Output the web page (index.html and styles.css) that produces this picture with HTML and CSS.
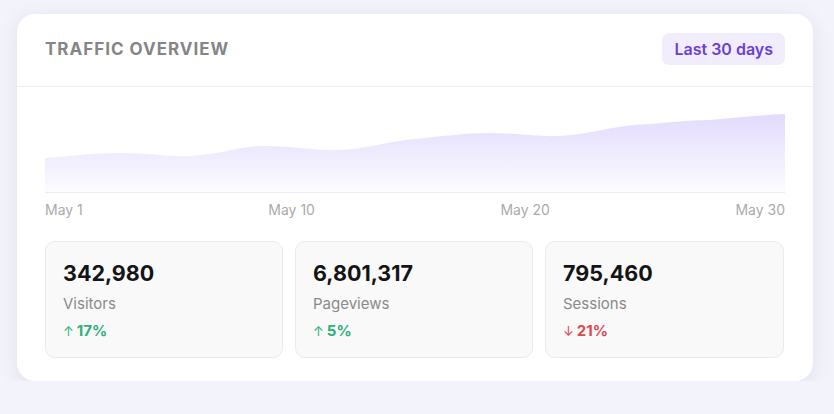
FILE: index.html
```html
<!DOCTYPE html>
<html>
<head>
    <meta charset="utf-8">
    <title>Traffic overview</title>
    <link rel="stylesheet" href="styles.css">
</head>
<body>
    <div class="card">
        <div class="card-head">
            <h3>TRAFFIC OVERVIEW</h3>
            <span class="range">Last 30 days</span>
        </div>

        <div class="card-body">
            <svg class="chart" viewBox="0 0 740 92" preserveAspectRatio="none">
                <defs>
                    <linearGradient id="fill" x1="0" y1="0" x2="0" y2="1">
                        <stop offset="0" stop-color="#e2dbfd"/>
                        <stop offset="1" stop-color="#e2dbfd" stop-opacity="0.1"/>
                    </linearGradient>
                </defs>
                <path d="M0 57 C30 55 50 52 75 52 C100 52 125 56 145 55 C175 54 195 45 220 45 C250 45 270 50 295 49 C320 48 345 40 370 38 C400 35 420 32 445 32 C470 32 490 36 515 35 C545 33 565 26 590 24 C620 22 645 19 665 19 C690 17 715 14 740 13 L740 91 L0 91 Z" fill="url(#fill)"/>
                <line x1="0" y1="91.5" x2="740" y2="91.5" stroke="#ececf0" stroke-width="1"/>
            </svg>
            <div class="axis">
                <span>May 1</span>
                <span>May 10</span>
                <span>May 20</span>
                <span>May 30</span>
            </div>

            <div class="stats">
                <div class="stat">
                    <b>342,980</b>
                    <span>Visitors</span>
                    <em class="up"><i>↑</i>17%</em>
                </div>
                <div class="stat">
                    <b>6,801,317</b>
                    <span>Pageviews</span>
                    <em class="up"><i>↑</i>5%</em>
                </div>
                <div class="stat">
                    <b>795,460</b>
                    <span>Sessions</span>
                    <em class="down"><i>↓</i>21%</em>
                </div>
            </div>
        </div>
    </div>
</body>
</html>
```

FILE: styles.css
```css
*{box-sizing:border-box;  margin:0;  }
body{background:#f3f3fb;  padding:14px 21px 0 17px;  font-family:Inter, 'Liberation Sans', sans-serif;  }

.card{width:796px;  background:#fff;  border-radius:18px;  box-shadow:0 4px 18px rgba(120,120,170,0.14);  }

.card-head{display:flex;  align-items:center;  justify-content:space-between;  padding:19px 28px 21px;  border-bottom:1px solid #efeff2;  }
.card-head h3{font-size:17px;  font-weight:700;  letter-spacing:1px;  color:#858585;  }
.range{background:#f1edfd;  color:#6a3fd6;  font-size:16px;  font-weight:600;  padding:0 12px;  line-height:32px;  border-radius:7px;  }

.card-body{padding:14px 28px 23px;  }
.chart{display:block;  width:740px;  height:92px;  }

.axis{display:flex;  justify-content:space-between;  margin-top:8px;  font-size:14px;  line-height:18px;  color:#ababab;  }

.stats{display:grid;  grid-template-columns:238px 238px 239px;  gap:12px;  margin-top:22px;  }
.stat{display:flex;  flex-direction:column;  background:#f9f9f9;  border:1px solid #ebebeb;  border-radius:10px;  padding:17px 17px 16px;  }
.stat b{font-size:21.5px;  line-height:28px;  font-weight:700;  color:#141414;  }
.stat span{font-size:15px;  line-height:20px;  color:#8a8a8a;  margin-top:7px;  }
.stat em{font-style:normal;  font-size:15px;  line-height:20px;  font-weight:700;  margin-top:7px;  }
.stat em i{font-style:normal;  font-weight:400;  font-size:13px;  margin-right:3px;  }
.up{color:#2db079;  }
.down{color:#e0484e;  }
```
